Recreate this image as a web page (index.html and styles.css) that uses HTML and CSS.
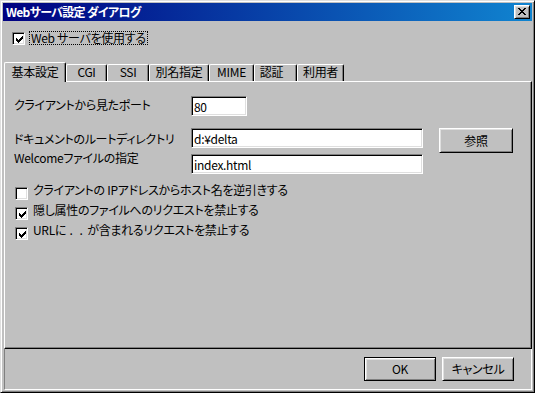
FILE: index.html
```html
<!DOCTYPE html>
<html lang="ja">
<head>
<meta charset="utf-8">
<title>Webサーバ設定 ダイアログ</title>
<link rel="stylesheet" href="styles.css">
</head>
<body>
<div class="window">
  <div class="titlebar">
    <span class="title">Webサーバ設定 ダイアログ</span>
    <span class="close-btn">
      <svg class="close-glyph" width="8" height="7" viewBox="0 0 8 7" shape-rendering="crispEdges">
        <path d="M0 0h2v1h-2z M6 0h2v1h-2z M1 1h2v1h-2z M5 1h2v1h-2z M2 2h4v1h-4z M3 3h2v1h-2z M2 4h4v1h-4z M1 5h2v1h-2z M5 5h2v1h-2z M0 6h2v1h-2z M6 6h2v1h-2z" fill="#000"/>
      </svg>
    </span>
  </div>

  <div class="top-option">
    <span class="checkbox">
      <svg class="check" width="7" height="7" viewBox="0 0 7 7" shape-rendering="crispEdges">
        <path d="M0 2h1v3h-1z M1 3h1v3h-1z M2 4h1v3h-1z M3 3h1v3h-1z M4 2h1v3h-1z M5 1h1v3h-1z M6 0h1v3h-1z" fill="#000"/>
      </svg>
    </span>
    <span class="focus-label">Web サーバを使用する</span>
  </div>

  <div class="tabs">
    <div class="tab tab-active tab-basic">基本設定</div>
    <div class="tab tab-cgi">CGI</div>
    <div class="tab tab-ssi">SSI</div>
    <div class="tab tab-alias">別名指定</div>
    <div class="tab tab-mime">MIME</div>
    <div class="tab tab-auth">認証</div>
    <div class="tab tab-user">利用者</div>
  </div>

  <div class="panel">
    <div class="row row-port">
      <span class="field-label label-port">クライアントから見たポート</span>
      <input class="field field-short" type="text" value="80">
    </div>
    <div class="row row-doc">
      <span class="field-label label-doc">ドキュメントのルートディレクトリ</span>
      <input class="field field-long field-doc" type="text" value="d:¥delta">
      <button class="btn btn-browse">参照</button>
    </div>
    <div class="row row-welcome">
      <span class="field-label label-welcome">Welcomeファイルの指定</span>
      <input class="field field-long" type="text" value="index.html">
    </div>

    <div class="options">
      <div class="option">
        <span class="checkbox"></span>
        <span class="option-label">クライアントの IPアドレスからホスト名を逆引きする</span>
      </div>
      <div class="option">
        <span class="checkbox">
          <svg class="check" width="7" height="7" viewBox="0 0 7 7" shape-rendering="crispEdges">
            <path d="M0 2h1v3h-1z M1 3h1v3h-1z M2 4h1v3h-1z M3 3h1v3h-1z M4 2h1v3h-1z M5 1h1v3h-1z M6 0h1v3h-1z" fill="#000"/>
          </svg>
        </span>
        <span class="option-label">隠し属性のファイルへのリクエストを禁止する</span>
      </div>
      <div class="option">
        <span class="checkbox">
          <svg class="check" width="7" height="7" viewBox="0 0 7 7" shape-rendering="crispEdges">
            <path d="M0 2h1v3h-1z M1 3h1v3h-1z M2 4h1v3h-1z M3 3h1v3h-1z M4 2h1v3h-1z M5 1h1v3h-1z M6 0h1v3h-1z" fill="#000"/>
          </svg>
        </span>
        <span class="option-label">URLに <span class="dots">. .</span> が含まれるリクエストを禁止する</span>
      </div>
    </div>
  </div>

  <div class="footer">
    <button class="btn btn-default">OK</button>
    <button class="btn">キャンセル</button>
  </div>
</div>
</body>
</html>
```

FILE: styles.css
```css
* { box-sizing: border-box; }

html, body {
  margin: 0;
  padding: 0;
  background: #c0c0c0;
}

body {
  font-family: "Noto Sans CJK JP", "Noto Sans", "Liberation Sans", sans-serif;
  font-size: 12px;
  color: #000;
  font-feature-settings: "palt";
  letter-spacing: -0.3px;
}

.window {
  width: 535px;
  height: 393px;
  border: 1px solid;
  border-color: #dfdfdf #000 #000 #dfdfdf;
  box-shadow: inset 1px 1px #fff, inset -1px -1px #808080;
  padding: 2px;
  display: flex;
  flex-direction: column;
  background: #c0c0c0;
}

/* title bar */
.titlebar {
  height: 18px;
  flex: none;
  background: linear-gradient(90deg, #000080 0%, #1084d0 100%);
  display: flex;
  align-items: center;
  justify-content: space-between;
  padding: 0 2px 0 3px;
}

.title {
  color: #fff;
  font-weight: bold;
  font-size: 12px;
  line-height: 14px;
  letter-spacing: -0.7px;
  white-space: nowrap;
}

.close-btn {
  width: 16px;
  height: 14px;
  background: #c0c0c0;
  border: 1px solid;
  border-color: #fff #000 #000 #fff;
  box-shadow: inset 1px 1px #dfdfdf, inset -1px -1px #808080;
  display: flex;
  align-items: flex-start;
  justify-content: flex-start;
  padding: 2px 0 0 3px;
}

.close-glyph { display: block; }

/* checkbox */
.checkbox {
  width: 13px;
  height: 13px;
  flex: none;
  background: #fff;
  border: 1px solid;
  border-color: #808080 #fff #fff #808080;
  box-shadow: inset 1px 1px #000, inset -1px -1px #dfdfdf;
  padding: 3px 0 0 3px;
}

.check { display: block; }

.top-option {
  flex: none;
  display: flex;
  align-items: flex-start;
  margin-top: 10px;
  padding-left: 9px;
  height: 14px;
}

.top-option .checkbox { margin-top: 1px; }

.focus-label {
  margin-left: 4px;
  border: 1px dotted #000;
  line-height: 12px;
  padding: 0 1px 0 1px;
  white-space: nowrap;
}

/* tabs */
.tabs {
  flex: none;
  display: flex;
  align-items: flex-end;
  margin-top: 17px;
  margin-left: 1px;
  height: 19px;
}

.tab {
  height: 17px;
  border-top: 1px solid #fff;
  border-left: 1px solid #fff;
  border-right: 1px solid #000;
  box-shadow: inset -1px 0 #808080;
  border-radius: 2px 2px 0 0;
  line-height: 14px;
  padding-top: 0;
  text-align: center;
  white-space: nowrap;
  background: #c0c0c0;
}

.tab-active {
  height: 20px;
  margin-bottom: -1px;
  padding-top: 2px;
  position: relative;
  z-index: 1;
}

.tab-basic { width: 62px; }
.tab-cgi { width: 41px; }
.tab-ssi { width: 42px; }
.tab-alias { width: 60px; }
.tab-mime { width: 45px; }
.tab-auth { width: 43px; padding-right: 8px; }
.tab-user { width: 47px; }

/* panel */
.panel {
  flex: none;
  height: 268px;
  margin-left: 1px;
  border: 1px solid;
  border-color: #fff #000 #000 #fff;
  box-shadow: inset -1px -1px #808080;
  padding: 14px 0 0 9px;
  display: flex;
  flex-direction: column;
}

.row {
  display: flex;
  align-items: flex-start;
}

.field-label {
  width: 177px;
  flex: none;
  line-height: 14px;
  white-space: nowrap;
}

.label-port { margin-top: 2px; }
.row-doc { margin-top: 12px; }
.label-doc { margin-top: 4px; }
.field-doc { margin-top: 3px; }
.row-welcome { margin-top: 1px; }
.label-welcome { margin-top: -3px; }

.field {
  height: 20px;
  border: 1px solid;
  border-color: #808080 #fff #fff #808080;
  box-shadow: inset 1px 1px #000, inset -1px -1px #dfdfdf;
  background: #fff;
  font-family: inherit;
  font-size: 12px;
  font-feature-settings: "palt";
  letter-spacing: -0.3px;
  color: #000;
  padding: 0 2px;
  margin: 0;
  outline: none;
}

.field-short { width: 56px; }
.field-long { width: 232px; }

/* buttons */
.btn {
  width: 72px;
  height: 24px;
  margin: 0;
  padding: 0;
  background: #c0c0c0;
  border: 1px solid;
  border-color: #fff #000 #000 #fff;
  box-shadow: inset 1px 1px #dfdfdf, inset -1px -1px #808080;
  font-family: inherit;
  font-size: 12px;
  font-feature-settings: "palt";
  letter-spacing: -0.3px;
  color: #000;
  line-height: 14px;
}

.btn-browse {
  width: 74px;
  height: 25px;
  margin-left: 16px;
}

.btn-default {
  border-color: #000;
  box-shadow: inset 1px 1px #fff, inset -1px -1px #808080, inset 2px 2px #dfdfdf;
}

/* options */
.options {
  margin-top: 10px;
  padding-left: 1px;
  display: flex;
  flex-direction: column;
}

.option {
  height: 20px;
  display: flex;
  align-items: flex-start;
}

.option .checkbox { margin-top: 3px; }

.option-label {
  margin-left: 5px;
  line-height: 14px;
  margin-top: -1px;
  white-space: nowrap;
}

.dots {
  letter-spacing: 2px;
  margin: 0 0 0 1px;
}

/* footer */
.footer {
  flex: none;
  height: 41px;
  margin-left: 1px;
  border-left: 1px solid #808080;
  border-right: 1px solid #fff;
  border-bottom: 1px solid #fff;
  display: flex;
  justify-content: flex-end;
  align-items: flex-start;
  gap: 6px;
  padding: 8px 17px 0 0;
}
```
